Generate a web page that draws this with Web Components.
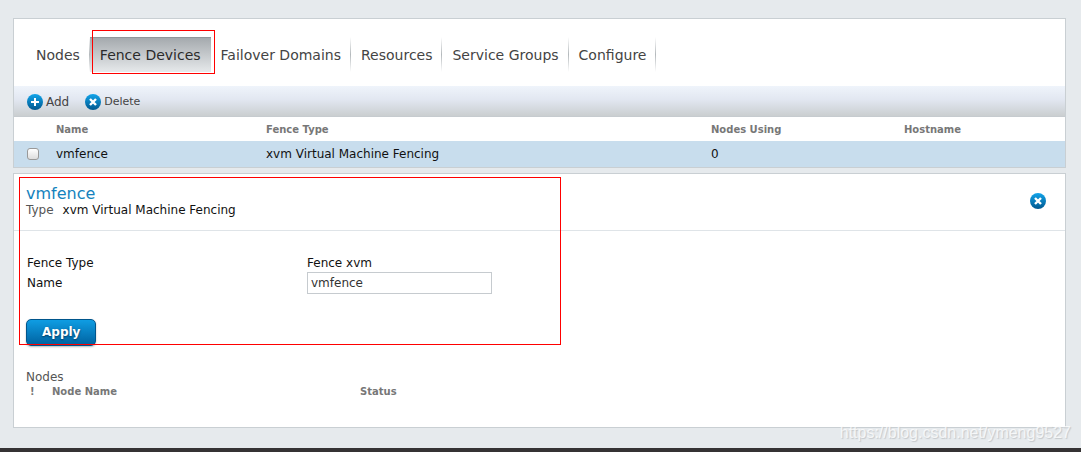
<!DOCTYPE html>
<html lang="en">
<head>
<meta charset="utf-8">
<title>Fence Devices</title>
<style>
html, body { margin: 0; }
body { font: 12px/16px "DejaVu Sans", sans-serif; color: #111; background: #e6eaed; }
</style>
</head>
<body>
<cluster-page></cluster-page>
<script>
function define(name, html) {
  const template = document.createElement('template');
  template.innerHTML = html;
  customElements.define(name, class extends HTMLElement {
    constructor() {
      super();
      this.attachShadow({ mode: 'open' }).append(template.content.cloneNode(true));
    }
  });
}

define('round-icon', `
<style>
:host { display: block; width: 16px; height: 16px; flex: none; }
svg { display: block; }
path { display: none; stroke: #fff; stroke-width: 2; fill: none; }
:host([kind="plus"]) .plus, :host([kind="cross"]) .cross { display: block; }
</style>
<svg width="16" height="16" viewBox="0 0 16 16" aria-hidden="true">
<defs><linearGradient id="g" x1="0" y1="0" x2="0" y2="1"><stop offset="0" stop-color="#12a4ea"/><stop offset="1" stop-color="#00588f"/></linearGradient></defs>
<circle cx="8" cy="8" r="8" fill="url(#g)"/>
<path class="plus" d="M8 4v8M4 8h8"/>
<path class="cross" style="stroke-width:2.4" d="M5 5l6 6M11 5l-6 6"/>
</svg>`);

define('mark-box', `
<style>:host { display: block; position: absolute; box-sizing: border-box; border: 1px solid #f00; pointer-events: none; }</style>`);

define('nav-tab', `
<style>
:host { display: block; position: relative; }
a { display: block; box-sizing: border-box; height: 35px; padding: 1px 10px 0; line-height: 35px; font-size: 14px; color: #444; text-decoration: none; white-space: nowrap;
  background: linear-gradient(#fff, #b4b9bc 50%, #fff) right / 1px 100% no-repeat; }
:host([active]) a { color: #2b2b2b; background: linear-gradient(#a3a8ac, #e6e9eb); box-shadow: inset 0 1px #91969a; }
mark-box { display: none; inset: -7px -4px -2px 2px; z-index: 1; }
:host([active]) mark-box { display: block; }
</style>
<a href="#"><slot></slot></a><mark-box></mark-box>`);

define('nav-bar', `
<style>
:host { display: block; padding: 18px 12px 14px; }
nav { display: flex; }
</style>
<nav><slot></slot></nav>`);

define('tool-button', `
<style>
:host { display: block; }
button { display: flex; align-items: center; gap: 3px; padding: 0; border: 0; background: none; font: inherit; line-height: 18px; color: #444; }
</style>
<button type="button"><slot name="icon"></slot><slot></slot></button>`);

define('tool-bar', `
<style>
:host { display: flex; align-items: center; gap: 16px; box-sizing: border-box; height: 31px; padding: 2px 13px 0; border-bottom: 1px solid #c6cbcf;
  background: linear-gradient(#eff4fb, #e2e7f1 45%, #caced0); }
.small { font-size: 11px; }
</style>
<tool-button><round-icon slot="icon" kind="plus"></round-icon>Add</tool-button>
<tool-button class="small"><round-icon slot="icon" kind="cross"></round-icon>Delete</tool-button>`);

define('page-panel', `
<style>:host { display: block; position: relative; background: #fff; border: 1px solid #c9cfd3; }</style>
<slot></slot>`);

define('device-table', `
<style>
:host { display: block; }
table { width: 100%; table-layout: fixed; border-collapse: collapse; }
th, td { padding: 0; text-align: left; }
th { height: 22px; padding-top: 2px; font-size: 10px; color: #777; }
td { height: 26px; background: #c8dded; }
.check { width: 42px; } .name { width: 210px; } .using { width: 193px; } .host { width: 161px; }
input { appearance: none; display: block; box-sizing: border-box; width: 12px; height: 12px; margin: 0 0 0 13px; border: 1px solid #999; border-radius: 3px; background: linear-gradient(#fff, #ddd); }
</style>
<table>
<thead><tr><th class="check"></th><th class="name">Name</th><th>Fence Type</th><th class="using">Nodes Using</th><th class="host">Hostname</th></tr></thead>
<tbody><tr><td><input type="checkbox" aria-label="vmfence"></td><td>vmfence</td><td>xvm Virtual Machine Fencing</td><td>0</td><td></td></tr></tbody>
</table>`);

define('device-header', `
<style>
:host { display: flex; justify-content: space-between; align-items: flex-start; padding: 11px 19px 12px 12px; border-bottom: 1px solid #dfe4e8; }
h2 { margin: 0; font-size: 16px; line-height: 17px; font-weight: 400; color: #1482bd; }
p { margin: 0; display: flex; gap: 9px; }
span { color: #555; }
button { margin: 8px 0 0; padding: 0; border: 0; background: none; }
</style>
<div><h2>vmfence</h2><p><span>Type</span>xvm Virtual Machine Fencing</p></div>
<button type="button" aria-label="Close"><round-icon kind="cross"></round-icon></button>`);

define('device-form', `
<style>
:host { display: block; padding: 23px 12px; }
.fields { display: grid; grid-template-columns: 280px 185px; align-items: center; padding-left: 1px; }
.fields > * { line-height: 18px; }
input { box-sizing: border-box; height: 22px; width: 100%; padding: 0 3px; border: 1px solid #c6cbcf; background: #fff; font: inherit; color: #333; }
button { display: block; height: 27px; margin-top: 25px; padding: 0 15px 2px; border: 1px solid #00558c; border-radius: 5px; background: linear-gradient(#0f9de3, #0062a0);
  font: bold 12px "DejaVu Sans", sans-serif; color: #fff; text-shadow: 0 1px 2px #003a60; box-shadow: 0 1px 2px #bbb; }
</style>
<form>
<div class="fields"><span>Fence Type</span><span>Fence xvm</span><label for="name">Name</label><input id="name" value="vmfence"></div>
<button type="button">Apply</button>
</form>`);

define('node-list', `
<style>
:host { display: block; padding: 0 12px 28px; }
h3 { margin: 0; font-size: 12px; line-height: 16px; font-weight: 400; color: #555; }
table { width: 100%; table-layout: fixed; border-collapse: collapse; }
th { padding: 0; text-align: left; font-size: 10px; line-height: 14px; color: #777; }
.flag { width: 22px; padding-left: 4px; } .name { width: 308px; }
</style>
<h3>Nodes</h3>
<table><thead><tr><th class="flag">!</th><th class="name">Node Name</th><th>Status</th></tr></thead></table>`);

define('cluster-page', `
<style>
:host { display: flex; flex-direction: column; min-height: 100vh; position: relative; }
main { flex: 1; display: flex; flex-direction: column; gap: 5px; padding: 18px 15px 20px 13px; }
footer { height: 4px; background: #353334; }
.detail { width: 542px; height: 168px; top: 3px; left: 5px; }
.watermark { position: absolute; right: 10px; bottom: 9px; font: 16px/20px "Liberation Sans", sans-serif; color: rgba(255,255,255,.75); text-shadow: 1px 1px 1px #c4c8cb; }
</style>
<main>
<page-panel>
<nav-bar><nav-tab>Nodes</nav-tab><nav-tab active>Fence Devices</nav-tab><nav-tab>Failover Domains</nav-tab><nav-tab>Resources</nav-tab><nav-tab>Service Groups</nav-tab><nav-tab>Configure</nav-tab></nav-bar>
<tool-bar></tool-bar>
<device-table></device-table>
</page-panel>
<page-panel>
<device-header></device-header>
<device-form></device-form>
<node-list></node-list>
<mark-box class="detail"></mark-box>
</page-panel>
</main>
<footer></footer>
<div class="watermark">https://blog.csdn.net/ymeng9527</div>`);
</script>
</body>
</html>
